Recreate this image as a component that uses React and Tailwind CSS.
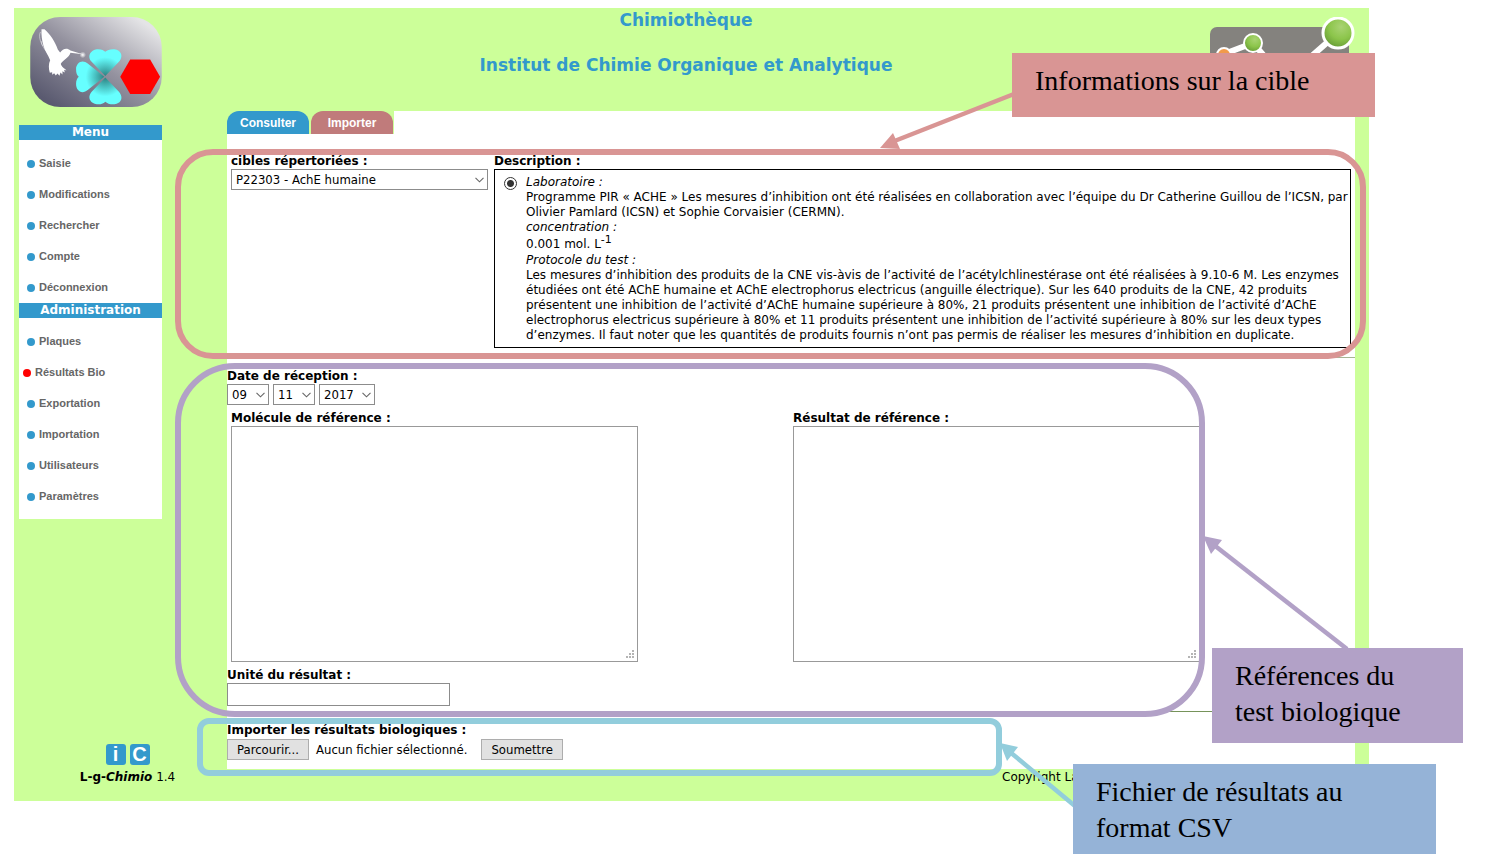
import { useState } from 'react';

const menuItems = ['Saisie', 'Modifications', 'Rechercher', 'Compte', 'Déconnexion'];
const adminItems = ['Plaques', 'Résultats Bio', 'Exportation', 'Importation', 'Utilisateurs', 'Paramètres'];

function BirdLogo() {
  return (
    <svg viewBox="90 51 396 271" className="h-[90px] w-[132px] shrink-0" role="img" aria-label="L-g-Chimio">
      <defs>
        <linearGradient id="plate" x1="0" y1="1" x2="1" y2="0">
          <stop offset="0.1" stopColor="#5a5a70" />
          <stop offset="0.5" stopColor="#94929f" />
          <stop offset="0.9" stopColor="#e4e4e6" />
        </linearGradient>
        <radialGradient id="leaf" gradientUnits="userSpaceOnUse" cx="316" cy="231" r="84">
          <stop offset="0" stopColor="#2a7d7d" />
          <stop offset="0.7" stopColor="#66ffff" />
        </radialGradient>
        <radialGradient id="spark">
          <stop offset="0" stopColor="#fff" />
          <stop offset="1" stopColor="#fff" stopOpacity="0" />
        </radialGradient>
      </defs>
      <rect x="90" y="51" width="396" height="271" rx="90" fill="url(#plate)" />
      <g fill="url(#leaf)">
        <path d="M316 229 L275 186 C258 166 276 148 294 148 C306 148 312 152 316 156 C322 151 328 148 340 148 C360 148 374 166 357 186 Z" />
        <path d="M316 233 L275 276 C258 296 276 314 294 314 C306 314 312 310 316 306 C322 311 328 314 340 314 C360 314 374 296 357 276 Z" />
        <path d="M313 231 L264 192 C246 176 228 190 228 208 C228 220 231 226 236 231 C231 236 228 242 228 253 C228 274 246 286 264 270 Z" />
      </g>
      <path
        d="M124 88 L133 88 C150 103 165 125 173 149 L180 158 C188 146 201 143 211 152 L248 163 L211 159 C207 174 190 180 182 192 C184 202 193 205 199 212 L192 210 L194 218 L187 214 L187 224 L181 218 L178 228 L172 221 L167 227 L162 220 L156 225 L156 217 L149 219 C145 205 145 192 150 181 C145 166 134 154 130 138 C125 121 123 105 124 88 Z"
        fill="#fff"
      />
      <path d="M121 96 C115 107 119 123 128 138 M124 124 C122 137 136 149 146 166" fill="none" stroke="#fff" strokeOpacity="0.45" strokeWidth="3" />
      <circle cx="248" cy="165" r="10" fill="url(#spark)" />
      <polygon points="391,179 451,179 481,231 451,283 391,283 361,231" fill="#f00" />
    </svg>
  );
}

function MoleculeLogo() {
  return (
    <svg viewBox="0 0 146 80" className="h-[80px] w-[146px] shrink-0" role="img" aria-label="Institut">
      <defs>
        <radialGradient id="ball" cx="0.6" cy="0.3" r="0.8">
          <stop offset="0" stopColor="#a9d373" />
          <stop offset="0.5" stopColor="#8cc54b" />
          <stop offset="1" stopColor="#5d9130" />
        </radialGradient>
      </defs>
      <rect x="0" y="10" width="139" height="70" rx="7" fill="#84827e" />
      <path d="M14 37 L43 26 L62 48 M128 16 L96 44" fill="none" stroke="#fff" strokeWidth="6" />
      <circle cx="14" cy="38" r="7" fill="#f19a4b" stroke="#fff" strokeWidth="2" />
      <circle cx="43" cy="26" r="9" fill="url(#ball)" stroke="#fff" strokeWidth="2" />
      <circle cx="128" cy="16" r="15" fill="url(#ball)" stroke="#fff" strokeWidth="3" />
    </svg>
  );
}

function MenuGroup({ title, items, active }) {
  return (
    <section>
      <h2 className="bg-[#3399cc] text-center text-[12px] font-bold leading-[15px] text-white">{title}</h2>
      <ul className="pt-2">
        {items.map((item) => {
          const current = item === active;
          return (
            <li key={item} className={current ? 'pl-1' : 'pl-2'}>
              <a
                href="#"
                className="flex h-[31px] items-center gap-1 font-['Liberation_Sans',Arial,sans-serif] text-[11px] font-bold text-[#666]"
              >
                <span className={current ? 'size-2 rounded-full bg-[#f00]' : 'size-2 rounded-full bg-[#3399cc]'} />
                {item}
              </a>
            </li>
          );
        })}
      </ul>
    </section>
  );
}

function Select({ label, options, className }) {
  return (
    <span className={`relative inline-block ${className}`}>
      <select
        aria-label={label}
        className="block h-[21px] w-full appearance-none border border-[#8c8c8c] bg-white pl-1 pr-5 font-['DejaVu_Sans_Condensed','DejaVu_Sans',sans-serif] text-[13px] leading-[19px] text-black"
      >
        {options.map((o) => (
          <option key={o}>{o}</option>
        ))}
      </select>
      <svg viewBox="0 0 9 6" className="pointer-events-none absolute right-1 top-2 h-[6px] w-[9px]">
        <path d="M0.5 0.8 L4.5 4.8 L8.5 0.8" fill="none" stroke="#666" strokeWidth="1.1" />
      </svg>
    </span>
  );
}

function ReferenceArea({ id, label }) {
  return (
    <div>
      <label htmlFor={id} className="block font-bold leading-4">{label}</label>
      <div className="relative w-[407px]">
        <textarea id={id} className="block h-[236px] w-full resize-none border border-[#999] bg-white" />
        <svg viewBox="0 0 9 9" className="pointer-events-none absolute bottom-[3px] right-[3px] size-[9px]" fill="#b4b4b4">
          <path d="M6 0h2v2h-2z M3 3h2v2h-2z M6 3h2v2h-2z M0 6h2v2h-2z M3 6h2v2h-2z M6 6h2v2h-2z" />
        </svg>
      </div>
    </div>
  );
}

const buttonStyle =
  "flex h-[21px] cursor-pointer items-center border border-[#adadad] bg-[#e1e1e1] px-[9px] font-['DejaVu_Sans_Condensed','DejaVu_Sans',sans-serif] text-[13px] text-black";

function Annotations() {
  const note = "absolute font-['Liberation_Serif',serif] text-[28px] leading-[36px] text-black";
  return (
    <div className="pointer-events-none absolute inset-0">
      <div className="absolute left-[175px] top-[149px] h-[210px] w-[1191px] rounded-[38px] border-[6px] border-[#d99594]" />
      <div className="absolute left-[175px] top-[363px] h-[354px] w-[1030px] rounded-[60px] border-[6px] border-[#b2a1c7]" />
      <div className="absolute left-[197px] top-[718px] h-[58px] w-[805px] rounded-[12px] border-[6px] border-[#92cddc]" />
      <svg viewBox="0 0 1485 866" className="absolute left-0 top-0 h-[866px] w-[1485px]">
        <g strokeWidth="4.5">
          <path d="M1014 94 L892 142" stroke="#d99594" />
          <path d="M1347 649 L1214 545" stroke="#b2a1c7" />
          <path d="M1075 806 L1010 752" stroke="#92cddc" />
        </g>
        <polygon points="880,148 893,133 900,149" fill="#d99594" />
        <polygon points="1203,536 1222,540 1211,554" fill="#b2a1c7" />
        <polygon points="1000,743 1018,747 1007,761" fill="#92cddc" />
      </svg>
      <p className={`${note} left-[1012px] top-[53px] h-[64px] w-[363px] bg-[#d99594] px-[23px] py-[10px]`}>
        Informations sur la cible
      </p>
      <p className={`${note} left-[1212px] top-[648px] h-[95px] w-[251px] bg-[#b2a1c7] px-[23px] py-[10px]`}>
        Références du
        <br />
        test biologique
      </p>
      <p className={`${note} left-[1073px] top-[764px] h-[90px] w-[363px] bg-[#95b3d7] px-[23px] py-[10px]`}>
        Fichier de résultats au
        <br />
        format CSV
      </p>
    </div>
  );
}

export default function App() {
  const [fileName, setFileName] = useState('Aucun fichier sélectionné.');
  return (
    <div className="relative bg-white pb-[65px] pl-[14px] pr-[116px] pt-2 font-['DejaVu_Sans',Verdana,sans-serif] text-[12px] text-black">
      <div className="bg-[#ccff99]">
        <header className="flex h-[103px] items-start pl-4 pr-[13px] pt-0">
          <div className="pt-[9px]">
            <BirdLogo />
          </div>
          <div className="flex flex-1 flex-col gap-[21px] text-center text-[17px] font-bold leading-6 text-[#3399cc]">
            <h1>Chimiothèque</h1>
            <p>Institut de Chimie Organique et Analytique</p>
          </div>
          <div className="pt-[9px]">
            <MoleculeLogo />
          </div>
        </header>

        <div className="flex">
          <aside className="flex w-[213px] shrink-0 flex-col justify-between pt-[14px]">
            <nav className="ml-[5px] w-[143px] bg-white pb-[7px]">
              <MenuGroup title="Menu" items={menuItems} />
              <MenuGroup title="Administration" items={adminItems} active="Résultats Bio" />
            </nav>
            <div className="flex flex-col items-center gap-1 pb-4 pl-[14px]">
              <div className="flex gap-1 font-['Liberation_Sans',Arial,sans-serif] text-[20px] font-bold leading-[21px] text-white">
                <a href="#" className="h-[21px] w-5 rounded-[3px] bg-[#3399cc] text-center">i</a>
                <a href="#" className="h-[21px] w-5 rounded-[3px] bg-[#3399cc] text-center">C</a>
              </div>
              <p className="leading-4">
                <b>L-g-<i>Chimio</i></b> 1.4
              </p>
            </div>
          </aside>

          <div className="min-w-0 flex-1 pr-[14px]">
            <main className="bg-white pb-[9px]">
              <div className="flex w-[167px] gap-[2px] bg-[#ccff99] font-['Liberation_Sans',Arial,sans-serif] text-[12px] font-bold text-white">
                <button type="button" className="h-[23px] w-[82px] rounded-t-[12px] bg-[#3399cc]">Consulter</button>
                <button type="button" className="h-[23px] w-[82px] rounded-t-[12px] bg-[#c07b7b]">Importer</button>
              </div>

              <section className="flex gap-[6px] px-1 pt-[19px]">
                <div className="w-[257px] shrink-0">
                  <p className="font-bold leading-4">cibles répertoriées :</p>
                  <Select label="cibles répertoriées" options={['P22303 - AchE humaine']} className="w-full" />
                </div>
                <div className="min-w-0 flex-1">
                  <p className="font-bold leading-4">Description :</p>
                  <div className="flex items-start gap-[9px] border border-black pb-1 pl-[9px] pt-[5px]">
                    <input
                      type="radio"
                      id="labo"
                      name="labo"
                      defaultChecked
                      className="mt-[2px] size-[13px] shrink-0 appearance-none rounded-full border border-[#333] bg-[radial-gradient(circle,#333_3px,#fff_4px)]"
                    />
                    <label htmlFor="labo" className="block leading-[15px]">
                      <i className="block">Laboratoire :</i>
                      <span className="block">
                        Programme PIR « ACHE » Les mesures d’inhibition ont été réalisées en collaboration avec l’équipe du Dr
                        Catherine Guillou de l’ICSN, par Olivier Pamlard (ICSN) et Sophie Corvaisier (CERMN).
                      </span>
                      <i className="block">concentration :</i>
                      <span className="block h-[18px] leading-[18px]">
                        0.001 mol. L<sup className="text-[11px]">-1</sup>
                      </span>
                      <i className="block">Protocole du test :</i>
                      <span className="block">
                        Les mesures d’inhibition des produits de la CNE vis-àvis de l’activité de l’acétylchlinestérase ont été
                        réalisées à 9.10-6 M. Les enzymes étudiées ont été AChE humaine et AChE electrophorus electricus
                        (anguille électrique). Sur les 640 produits de la CNE, 42 produits présentent une inhibition de
                        l’activité d’AChE humaine supérieure à 80%, 21 produits présentent une inhibition de l’activité d’AChE
                        electrophorus electricus supérieure à 80% et 11 produits présentent une inhibition de l’activité
                        supérieure à 80% sur les deux types d’enzymes. Il faut noter que les quantités de produits fournis n’ont
                        pas permis de réaliser les mesures d’inhibition en duplicate.
                      </span>
                    </label>
                  </div>
                </div>
              </section>

              <hr className="mt-[9px] border-[#a5b594]" />

              <section className="pt-[10px]">
                <p className="font-bold leading-4">Date de réception :</p>
                <div className="flex gap-1">
                  <Select label="Jour" options={['09']} className="w-[42px]" />
                  <Select label="Mois" options={['11']} className="w-[42px]" />
                  <Select label="Année" options={['2017']} className="w-[56px]" />
                </div>
                <div className="grid grid-cols-2 pl-1 pt-[5px]">
                  <ReferenceArea id="molecule" label="Molécule de référence :" />
                  <ReferenceArea id="resultat" label="Résultat de référence :" />
                </div>
                <label htmlFor="unite" className="block pt-[5px] font-bold leading-4">Unité du résultat :</label>
                <input id="unite" type="text" className="block h-[23px] w-[223px] border border-[#8c8c8c] bg-white px-1" />
              </section>

              <hr className="mt-[5px] border-[#76935a]" />

              <section className="pt-[10px]">
                <p className="font-bold leading-4">Importer les résultats biologiques :</p>
                <div className="flex items-center pt-px">
                  <label className="flex items-center gap-[7px] font-['DejaVu_Sans_Condensed','DejaVu_Sans',sans-serif] text-[13px]">
                    <input
                      type="file"
                      className="sr-only"
                      onChange={(e) => e.target.files[0] && setFileName(e.target.files[0].name)}
                    />
                    <span className={buttonStyle}>Parcourir...</span>
                    {fileName}
                  </label>
                  <button type="submit" className={`${buttonStyle} ml-[14px]`}>Soumettre</button>
                </div>
              </section>
            </main>
            <footer className="pb-4 pl-[775px] leading-4">Copyright La</footer>
          </div>
        </div>
      </div>
      <Annotations />
    </div>
  );
}
